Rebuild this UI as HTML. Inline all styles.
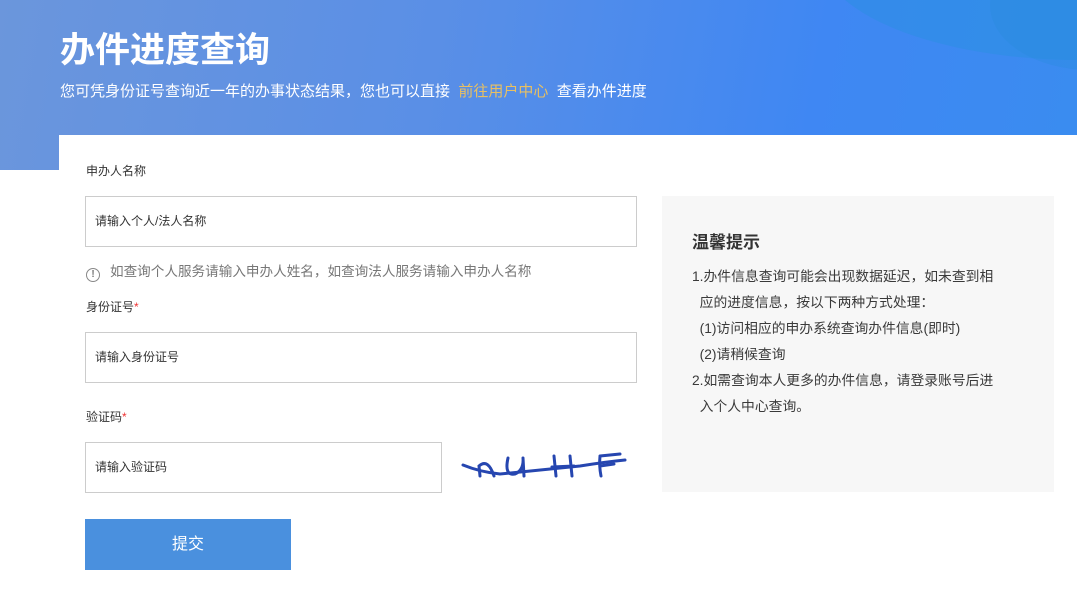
<!DOCTYPE html>
<html><head><meta charset="utf-8">
<style>
*{margin:0;padding:0;box-sizing:border-box}
body{width:1077px;height:584px;overflow:hidden;background:#fff;font-family:"Liberation Sans","Noto Sans CJK SC",sans-serif;position:relative}
.banner{position:absolute;left:0;top:0;width:1077px;height:170px;background:linear-gradient(100deg,#6b96dc 0%,#5a8fe6 40%,#3f87f3 75%,#3a8cf0 100%);overflow:hidden}
.banner .w1{position:absolute;left:820px;top:-150px;width:520px;height:210px;border-radius:50%;background:rgba(40,145,225,0.45)}
.banner .w2{position:absolute;left:990px;top:-60px;width:200px;height:130px;border-radius:50%;background:rgba(40,140,220,0.35)}
h1{position:absolute;left:60px;top:22px;color:#fff;font-size:35px;font-weight:bold}
.sub{position:absolute;left:60px;top:80px;color:#fff;font-size:15px}
.sub span{color:#e8c062}
.card{position:absolute;left:59px;top:135px;width:1018px;height:460px;background:#fff}
.lbl{position:absolute;left:86px;font-size:12px;color:#333}
.lbl i{color:#e33;font-style:normal}
.inp{position:absolute;left:85px;height:51px;border:1px solid #ccc;font-size:12px;color:#333;padding-left:9px;line-height:49px}
.hint{position:absolute;left:86px;top:260px;font-size:13.6px;color:#777}
.hint b{display:inline-block;width:14px;height:14px;border:1.5px solid #888;border-radius:50%;font-size:10px;line-height:11px;text-align:center;color:#777;margin-right:10px;vertical-align:-1px;font-weight:bold}
.btn{position:absolute;left:85px;top:519px;width:206px;height:51px;background:#4a90de;color:#fff;font-size:16px;text-align:center;line-height:51px}
.tip{position:absolute;left:662px;top:196px;width:392px;height:296px;background:#f7f7f7;padding:32px 0 0 30px}
.tip h3{font-size:17px;color:#333;font-weight:bold;margin-bottom:11px}
.tip p{font-size:13.8px;color:#3a3a3a;line-height:26px}
</style></head><body>
<div class="banner"><div class="w1"></div><div class="w2"></div>
<h1>办件进度查询</h1>
<div class="sub">您可凭身份证号查询近一年的办事状态结果，您也可以直接 &nbsp;<span>前往用户中心</span>&nbsp; 查看办件进度</div>
</div>
<div class="card"></div>
<div class="lbl" style="top:162px">申办人名称</div>
<div class="inp" style="top:196px;width:552px">请输入个人/法人名称</div>
<div class="hint"><b>!</b>如查询个人服务请输入申办人姓名，如查询法人服务请输入申办人名称</div>
<div class="lbl" style="top:298px">身份证号<i>*</i></div>
<div class="inp" style="top:332px;width:552px">请输入身份证号</div>
<div class="lbl" style="top:408px">验证码<i>*</i></div>
<div class="inp" style="top:442px;width:357px">请输入验证码</div>
<svg style="position:absolute;left:460px;top:448px" width="170" height="40" viewBox="0 0 170 40" fill="none" stroke="#2646b0" stroke-width="3" stroke-linecap="round">
<path d="M3 17 Q20 24 40 26 Q80 22 120 18 Q145 14 165 12"/>
<path d="M20 28 L19 18 Q28 10 34 28"/>
<path d="M48 10 Q44 28 55 26 Q64 22 63 10 M63 10 L64 28"/>
<path d="M94 8 L96 28 M110 8 L112 28 M92 19 L114 18"/>
<path d="M140 8 L160 6 M140 8 Q139 18 141 28 M140 18 L154 16"/>
</svg>
<div class="btn">提交</div>
<div class="tip">
<h3>温馨提示</h3>
<p>1.办件信息查询可能会出现数据延迟，如未查到相</p>
<p>&nbsp;&nbsp;应的进度信息，按以下两种方式处理：</p>
<p>&nbsp;&nbsp;(1)访问相应的申办系统查询办件信息(即时)</p>
<p>&nbsp;&nbsp;(2)请稍候查询</p>
<p>2.如需查询本人更多的办件信息，请登录账号后进</p>
<p>&nbsp;&nbsp;入个人中心查询。</p>
</div>
</body></html>
